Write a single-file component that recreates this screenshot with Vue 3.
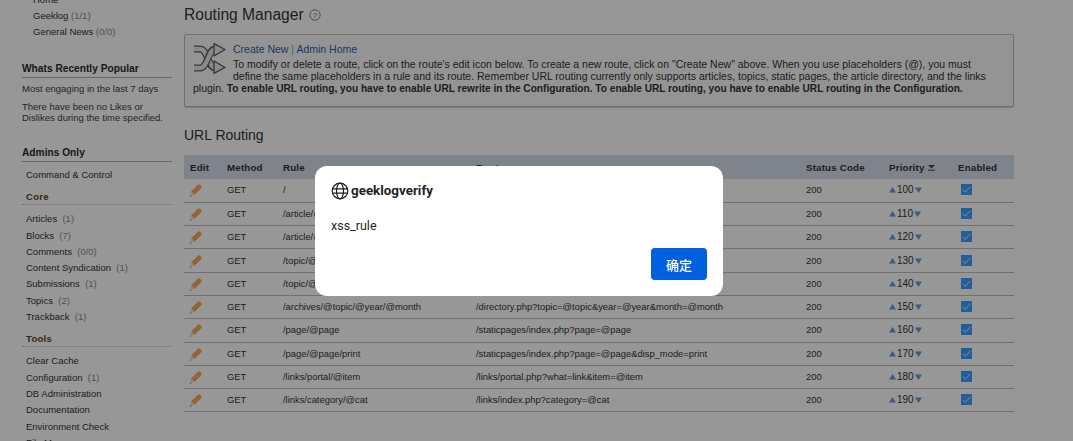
<script setup>
const coreItems = [
  ['Articles', '(1)'], ['Blocks', '(7)'], ['Comments', '(0/0)'], ['Content Syndication', '(1)'],
  ['Submissions', '(1)'], ['Topics', '(2)'], ['Trackback', '(1)']
]
const toolItems = [
  ['Clear Cache', ''], ['Configuration', '(1)'], ['DB Administration', ''], ['Documentation', ''],
  ['Environment Check', ''], ['File Manager', '']
]
const routes = [
  ['/', '/article.php?story=@sid', 100],
  ['/article/@sid', '/article.php?story=@sid', 110],
  ['/article/@sid/print', '/article.php?story=@sid&mode=print', 120],
  ['/topic/@topic', '/index.php?topic=@topic', 130],
  ['/topic/@topic/@page', '/index.php?topic=@topic&page=@page', 140],
  ['/archives/@topic/@year/@month', '/directory.php?topic=@topic&year=@year&month=@month', 150],
  ['/page/@page', '/staticpages/index.php?page=@page', 160],
  ['/page/@page/print', '/staticpages/index.php?page=@page&disp_mode=print', 170],
  ['/links/portal/@item', '/links/portal.php?what=link&item=@item', 180],
  ['/links/category/@cat', '/links/index.php?category=@cat', 190]
]
</script>

<template>
  <div class="page">
    <aside class="sidebar">
      <div class="home">Home</div>
      <div class="topic">Geeklog <span class="count">(1/1)</span></div>
      <div class="topic">General News <span class="count">(0/0)</span></div>

      <h3 class="block-title popular">Whats Recently Popular</h3>
      <p class="note">Most engaging in the last 7 days</p>
      <p class="note second">There have been no Likes or Dislikes during the time specified.</p>

      <h3 class="block-title admins">Admins Only</h3>
      <div class="item command">Command &amp; Control</div>
      <div class="group">Core</div>
      <div v-for="it in coreItems" :key="it[0]" class="item">{{ it[0] }} <span class="count">&nbsp;{{ it[1] }}</span></div>
      <div class="group tools">Tools</div>
      <div v-for="it in toolItems" :key="it[0]" class="item">{{ it[0] }} <span v-if="it[1]" class="count">&nbsp;{{ it[1] }}</span></div>
    </aside>

    <main class="content">
      <h1 class="title">Routing Manager
        <svg class="help" width="12" height="12" viewBox="0 0 12 12">
          <circle cx="6" cy="6" r="5.2" fill="none" stroke="#888" stroke-width="1" />
          <text x="6" y="8.8" text-anchor="middle" font-size="8" fill="#777" font-family="Liberation Sans">?</text>
        </svg>
      </h1>

      <section class="info">
        <svg class="shuffle" width="33" height="31" viewBox="0 0 33 31" fill="none">
          <path d="M1 6h6c8 0 8 19 15 19" stroke="#5c5c5c" stroke-width="7" />
          <path d="M1 6h6c8 0 8 19 16 19" stroke="#e6e6e6" stroke-width="4.500" />
          <path d="M1 25h6c8 0 8-19 15-19" stroke="#5c5c5c" stroke-width="7" />
          <path d="M1 25h6c8 0 8-19 16-19" stroke="#e6e6e6" stroke-width="4.500" />
          <path d="M21 .6 32 6.500 21 13zM21 18 32 24.500 21 30.400z" fill="#e6e6e6" stroke="#5c5c5c" stroke-width="1.300" stroke-linejoin="round" />
        </svg>
        <div class="links"><a>Create New</a><span class="sep"> | </span><a>Admin Home</a></div>
        To modify or delete a route, click on the route's edit icon below. To create a new route, click on "Create New" above. When you use placeholders (@), you must define the same placeholders in a rule and its route. Remember URL routing currently only supports articles, topics, static pages, the article directory, and the links plugin. <b>To enable URL routing, you have to enable URL rewrite in the Configuration. To enable URL routing, you have to enable URL routing in the Configuration.</b>
      </section>

      <h2 class="subtitle">URL Routing</h2>

      <table class="routes">
        <colgroup>
          <col style="width: 37px" /><col style="width: 56px" /><col style="width: 193px" /><col style="width: 330px" />
          <col style="width: 83px" /><col style="width: 69px" /><col style="width: 62px" />
        </colgroup>
        <thead>
          <tr>
            <th>Edit</th><th>Method</th><th>Rule</th><th>Route</th><th>Status Code</th>
            <th>Priority
              <svg class="sort" width="7" height="6" viewBox="0 0 7 6"><path d="M0 0h7L3.500 3.600z" fill="#444" /><path d="M0 5.200h7" stroke="#444" /></svg>
            </th>
            <th>Enabled</th>
          </tr>
        </thead>
        <tbody>
          <tr v-for="r in routes" :key="r[2]">
            <td>
              <svg class="pencil" width="13" height="13" viewBox="0 0 13 13">
                <path d="M2.500 7.500 8.800 1.200c.7-.7 1.500-.7 2.300 0l.7.7c.7.800.7 1.600 0 2.300L5.500 10.500z" fill="#ffa64d" stroke="#d98a3a" stroke-width=".5" />
                <path d="M2.500 7.500 5.500 10.500 1 12z" fill="#f2dcc0" />
                <path d="M.4 12.800 1.700 11.400 2.700 12z" fill="#333" />
              </svg>
            </td>
            <td>GET</td>
            <td>{{ r[0] }}</td>
            <td>{{ r[1] }}</td>
            <td>200</td>
            <td class="prio">
              <svg width="7" height="6" viewBox="0 0 7 6"><path d="M3.500 0 7 5.500H0z" fill="#6e95cc" /></svg><span>{{ r[2] }}</span><svg width="7" height="6" viewBox="0 0 7 6"><path d="M0 .5h7L3.500 6z" fill="#6e95cc" /></svg>
            </td>
            <td class="check-cell">
              <span class="check"><svg width="11" height="11" viewBox="0 0 11 11"><path d="M1.800 5.800 4.300 8.200 9.500 2.800" fill="none" stroke="#e8e8e8" stroke-width="1" /></svg></span>
            </td>
          </tr>
        </tbody>
      </table>
    </main>

    <div class="overlay">
      <div class="dialog">
        <div class="dialog-head">
          <svg width="18" height="18" viewBox="0 0 18 18" fill="none" stroke="#1f1f1f" stroke-width="1.200">
            <circle cx="9" cy="9" r="7.800" />
            <ellipse cx="9" cy="9" rx="3.500" ry="7.800" />
            <path d="M1.400 6.800h15.200M1.400 11.200h15.200" />
          </svg>
          <span>geeklogverify</span>
        </div>
        <div class="dialog-body">xss_rule</div>
        <div class="dialog-foot"><button class="ok">确定</button></div>
      </div>
    </div>
  </div>
</template>

<style>
html, body { margin: 0; background: #fff; }
</style>

<style scoped>
.page {
  display: flex;
  height: 441px;
  overflow: hidden;
  position: relative;
  font-family: "Liberation Sans", Arial, sans-serif;
  font-size: 9.500px;
  color: #333;
  background: #fcfcfc;
}
.sidebar {
  width: 150px;
  flex: none;
  margin: -8px 0 0 22px;
  color: #333;
}
.home, .topic { line-height: 16px; padding-left: 11px; height: 16px; }
.count { color: #888; }
.block-title {
  margin: 0;
  font-size: 10.200px;
  font-weight: bold;
  line-height: 14px;
  color: #2b2b2f;
  padding-bottom: 1px;
  border-bottom: 1px solid #aaa;
}
.popular { margin-top: 22px; }
.admins { margin-top: 23px; }
.note { margin: 5px 0 0; line-height: 11px; color: #3c3c3c; }
.second { margin-top: 7px; }
.item { line-height: 16.300px; height: 16.300px; padding-left: 4px; white-space: nowrap; }
.command { margin-top: 5px; }
.group {
  padding: 8px 0 1px 4px;
  line-height: 12px;
  color: #5a3f20;
  font-weight: bold;
  font-size: 9.500px;
  border-bottom: 1px dotted #bbb;
  margin-bottom: 6px;
  letter-spacing: .3px;
}
.tools { margin-top: 0; margin-bottom: 6px; }
.content { width: 830px; margin-left: 12px; flex: none; }
.title {
  margin: 6px 0 0;
  font-size: 15.600px;
  font-weight: normal;
  line-height: 18px;
  color: #333;
  display: flex;
  align-items: center;
  gap: 5px;
}
.info {
  margin-top: 10px;
  border: 1px solid #bbb;
  border-radius: 2px;
  background: #f7f7f7;
  padding: 7px 18px 8px 8px;
  font-size: 10.500px;
  line-height: 12px;
  color: #333;
  height: 56px;
  box-shadow: 0 1px 1px #ccc;
}
.info b { font-size: 10.150px; }
.shuffle { float: left; margin: 1px 7px 0 0; }
.links { line-height: 14px; margin-bottom: 2px; }
.links a { color: #2a5f9e; }
.sep { color: #999; }
.subtitle {
  margin: 19px 0 0;
  font-size: 14px;
  font-weight: normal;
  line-height: 18px;
  color: #333;
}
.routes {
  margin-top: 11px;
  width: 830px;
  table-layout: fixed;
  border-collapse: collapse;
  font-size: 9.400px;
}
.routes th {
  background: #d4dbe8;
  height: 24px;
  padding: 0 0 0 6px;
  text-align: left;
  font-weight: bold;
  font-size: 9.800px;
  color: #333;
  letter-spacing: .15px;
}
.routes td {
  height: 23.300px;
  padding: 0 0 1px 6px;
  box-sizing: border-box;
  border-bottom: 1px solid #bbb;
  white-space: nowrap;
  overflow: hidden;
  color: #333;
}
.sort { vertical-align: 0; margin-left: 1px; }
.pencil { display: block; margin: 2px 0 0 -1px; }
.prio svg { vertical-align: 0; }
.prio span { margin: 0 1px; font-size: 10px; }
.routes td.check-cell { padding-left: 9px; }
.check {
  display: flex;
  width: 11px;
  height: 11px;
  background: #3a9fff;
}
.overlay {
  position: fixed;
  inset: 0;
  background: rgba(0, 0, 0, 0.4);
  display: flex;
  align-items: flex-start;
  padding: 166px 0 0 315px;
}
.dialog {
  width: 408px;
  height: 130px;
  box-sizing: border-box;
  background: #fff;
  border-radius: 12px;
  padding: 16px 16px 16px;
  display: flex;
  flex-direction: column;
  font-family: Roboto, "Noto Sans CJK SC", sans-serif;
  color: #1f1f1f;
}
.dialog-head {
  display: flex;
  align-items: center;
  gap: 2px;
  font-weight: 700;
  font-size: 13.400px;
  line-height: 18px;
}
.dialog-body {
  margin-top: 17px;
  font-size: 12.500px;
  line-height: 18px;
}
.dialog-foot {
  margin-top: auto;
  display: flex;
  justify-content: flex-end;
}
.ok {
  width: 56px;
  height: 32px;
  border: 0;
  border-radius: 4px;
  background: #0060df;
  color: #fff;
  font-family: "Noto Sans CJK SC", sans-serif;
  font-size: 13px;
  font-weight: 500;
  padding: 0;
}
</style>
